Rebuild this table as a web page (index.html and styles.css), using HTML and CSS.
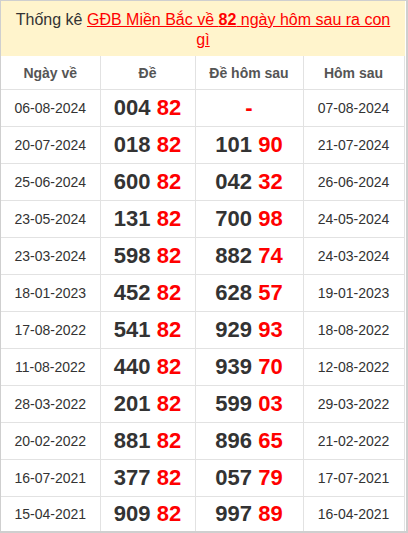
FILE: index.html
```html
<!DOCTYPE html>
<html lang="vi">
<head>
<meta charset="utf-8">
<link rel="stylesheet" href="styles.css">
</head>
<body>
<div class="box">
  <div class="title">Thống kê <a href="#">GĐB Miền Bắc về <b>82</b> ngày hôm sau ra con gì</a></div>
  <table class="tbl">
    <colgroup><col class="c1"><col class="c2"><col class="c3"><col class="c4"></colgroup>
    <thead>
      <tr><th>Ngày về</th><th>Đề</th><th>Đề hôm sau</th><th>Hôm sau</th></tr>
    </thead>
    <tbody>
      <tr><td>06-08-2024</td><td class="n">004 <span>82</span></td><td class="n"><span>-</span></td><td>07-08-2024</td></tr>
      <tr><td>20-07-2024</td><td class="n">018 <span>82</span></td><td class="n">101 <span>90</span></td><td>21-07-2024</td></tr>
      <tr><td>25-06-2024</td><td class="n">600 <span>82</span></td><td class="n">042 <span>32</span></td><td>26-06-2024</td></tr>
      <tr><td>23-05-2024</td><td class="n">131 <span>82</span></td><td class="n">700 <span>98</span></td><td>24-05-2024</td></tr>
      <tr><td>23-03-2024</td><td class="n">598 <span>82</span></td><td class="n">882 <span>74</span></td><td>24-03-2024</td></tr>
      <tr><td>18-01-2023</td><td class="n">452 <span>82</span></td><td class="n">628 <span>57</span></td><td>19-01-2023</td></tr>
      <tr><td>17-08-2022</td><td class="n">541 <span>82</span></td><td class="n">929 <span>93</span></td><td>18-08-2022</td></tr>
      <tr><td>11-08-2022</td><td class="n">440 <span>82</span></td><td class="n">939 <span>70</span></td><td>12-08-2022</td></tr>
      <tr><td>28-03-2022</td><td class="n">201 <span>82</span></td><td class="n">599 <span>03</span></td><td>29-03-2022</td></tr>
      <tr><td>20-02-2022</td><td class="n">881 <span>82</span></td><td class="n">896 <span>65</span></td><td>21-02-2022</td></tr>
      <tr><td>16-07-2021</td><td class="n">377 <span>82</span></td><td class="n">057 <span>79</span></td><td>17-07-2021</td></tr>
      <tr class="last"><td>15-04-2021</td><td class="n">909 <span>82</span></td><td class="n">997 <span>89</span></td><td>16-04-2021</td></tr>
    </tbody>
  </table>
</div>
</body>
</html>
```
FILE: styles.css
```css
html, body {
  margin: 0;
  padding: 0;
  background: #fff;
}
body {
  font-family: "Liberation Sans", Arial, sans-serif;
  color: #333;
}
.box {
  width: 404px;
  border-top: 1px solid #cfcfcf;
  border-left: 1px solid #cfcfcf;
  border-right: 2px solid #cfcfcf;
  border-bottom: 2px solid #cfcfcf;
  padding-right: 1px;
}
.title {
  background: #fff4cc;
  height: 55px;
  box-sizing: border-box;
  padding: 9px 10px 0;
  text-align: center;
  font-size: 16px;
  line-height: 20px;
  color: #333;
}
.title a {
  color: #f00;
  text-decoration: underline;
}
.title b {
  font-weight: bold;
}
.tbl {
  width: 403px;
  border-collapse: collapse;
  table-layout: fixed;
}
.c1 { width: 99px; }
.c2 { width: 95px; }
.c3 { width: 108px; }
.c4 { width: 101px; }
.tbl th, .tbl td {
  border: 1px solid #e2e2e2;
  text-align: center;
  padding: 0;
}
.tbl tr:first-child th { border-top: 0; }
.tbl th:first-child, .tbl td:first-child { border-left: 0; }
.tbl tbody tr:last-child td { border-bottom: 0; }
.tbl th {
  height: 33px;
  font-size: 14px;
  font-weight: bold;
  color: #555;
}
.tbl td {
  height: 36px;
  font-size: 14px;
  color: #333;
}
.tbl tr.last td {
  height: 34px;
}
.tbl td.n {
  font-size: 22px;
  font-weight: bold;
  color: #333;
}
.tbl td.n span {
  color: #f00;
}
```
